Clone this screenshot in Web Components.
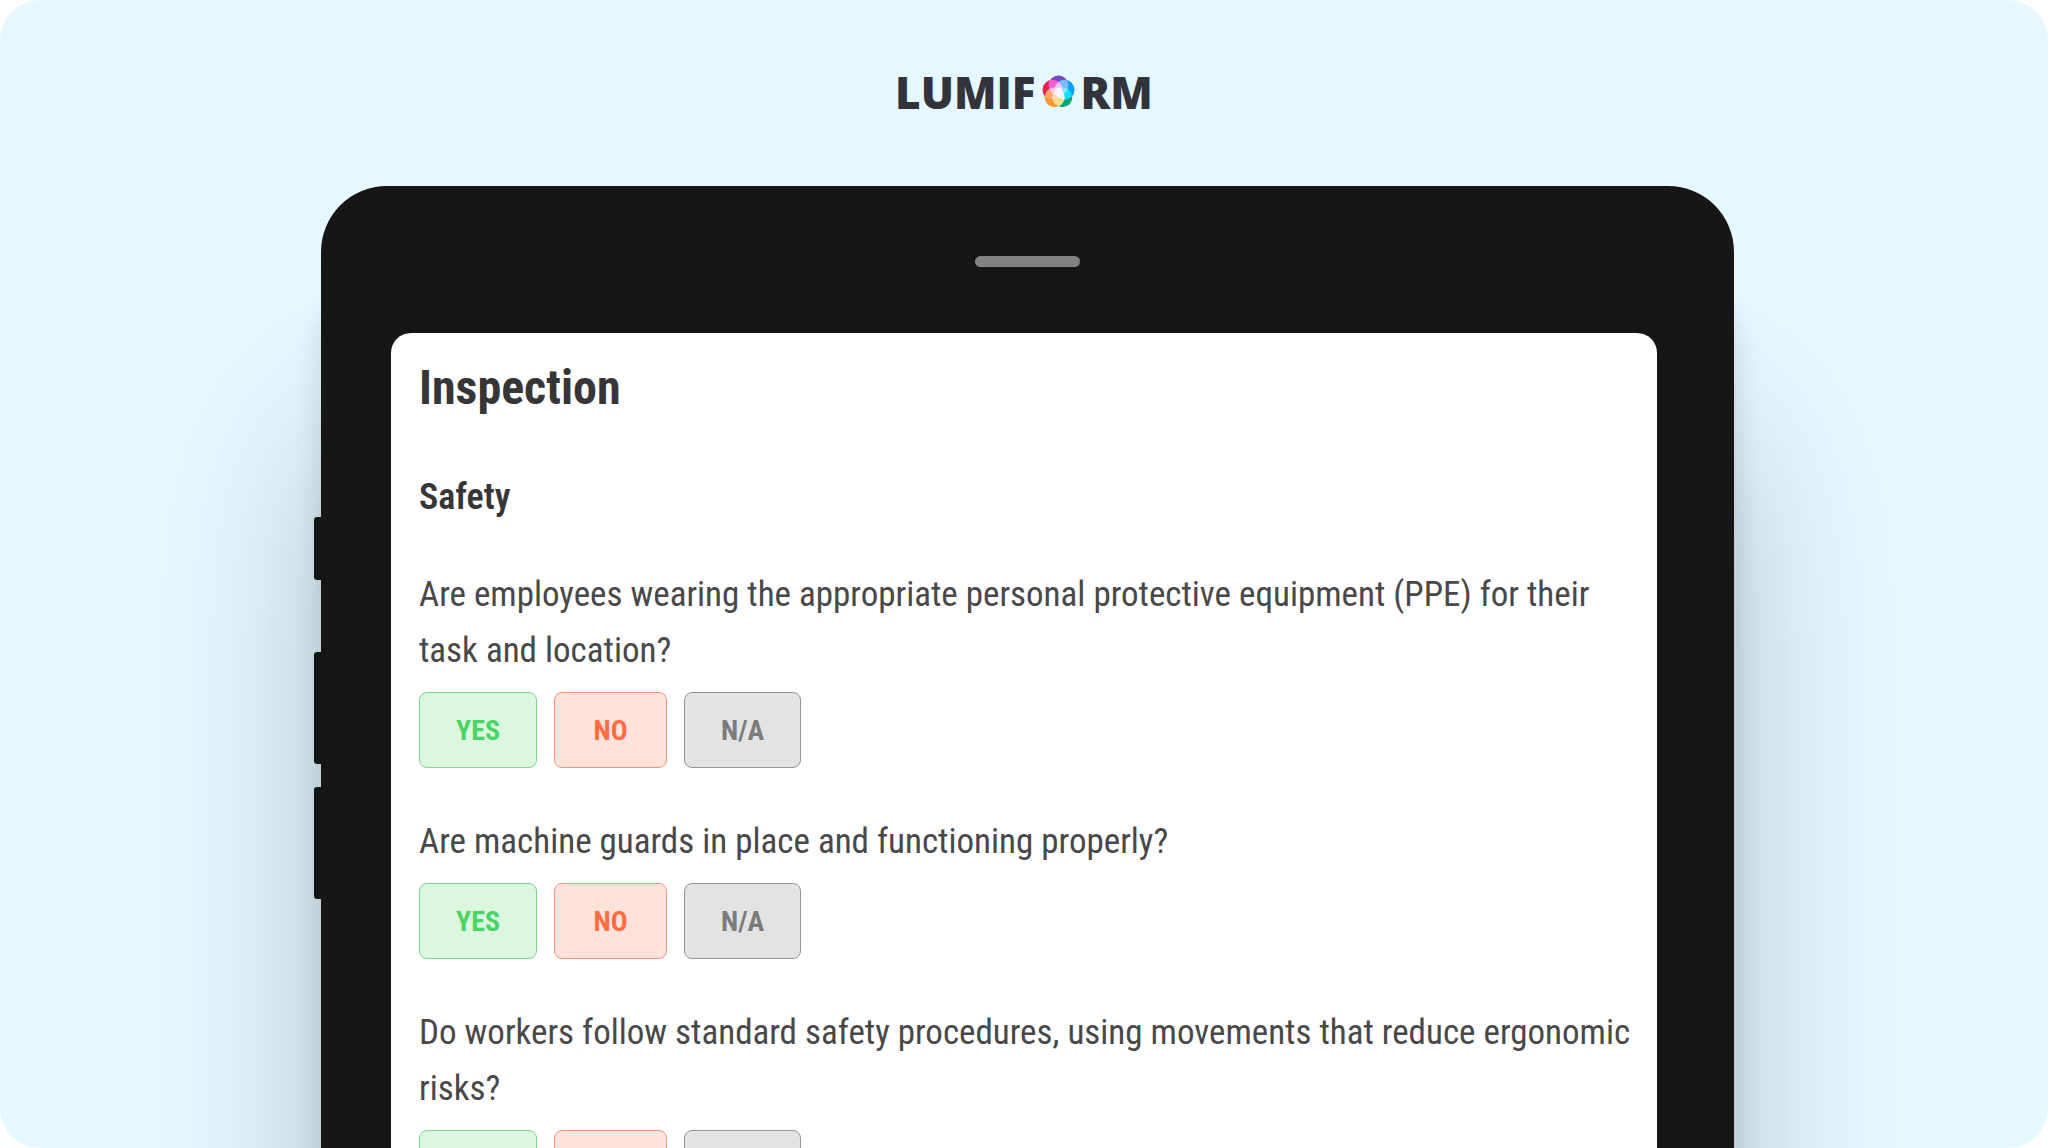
<!DOCTYPE html>
<html lang="en">
<head>
  <meta charset="utf-8">
  <meta name="viewport" content="width=device-width, initial-scale=1">
  <title>Lumiform</title>
  <style>
    body {
      margin: 0;
      background: #fff;
      color: #363636;
      font-family: "Roboto Condensed", Roboto, sans-serif;
    }
  </style>
</head>
<body>
  <promo-stage>
    <lumiform-logo slot="logo"></lumiform-logo>
    <tablet-frame>
      <inspection-form heading="Inspection" section="Safety">
        <inspection-question>Are employees wearing the appropriate personal protective equipment (PPE) for their task and location?</inspection-question>
        <inspection-question>Are machine guards in place and functioning properly?</inspection-question>
        <inspection-question>Do workers follow standard safety procedures, using movements that reduce ergonomic risks?</inspection-question>
      </inspection-form>
    </tablet-frame>
  </promo-stage>

  <script>
    class PromoStage extends HTMLElement {
      constructor() {
        super();
        this.attachShadow({ mode: 'open' });
        this.shadowRoot.innerHTML = `
          <style>
            :host {
              display: flex;
              flex-direction: column;
              height: 100vh;
              overflow: hidden;
              border-radius: 40px;
              background: #e6f8ff;
            }

            header {
              display: flex;
              flex-shrink: 0;
              justify-content: center;
              padding: 66px 0 68px;
            }

            main {
              flex-shrink: 0;
              margin: 0 314px;
            }
          </style>
          <header><slot name="logo"></slot></header>
          <main><slot></slot></main>
        `;
      }
    }

    class LumiformLogo extends HTMLElement {
      constructor() {
        super();
        this.attachShadow({ mode: 'open' });
        this.shadowRoot.innerHTML = `
          <style>
            :host {
              display: flex;
              align-items: center;
              gap: 6px;
              color: #33343b;
              font: 800 44px/52px "Open Sans", sans-serif;
            }

            svg {
              display: block;
              isolation: isolate;
            }

            circle {
              mix-blend-mode: screen;
            }
          </style>
          <span>LUMIF</span>
          <svg width="33" height="34" viewBox="0 0 33 34" role="img" aria-label="O">
            <circle cx="16.5" cy="10.5" r="10" fill="#7548c0" />
            <circle cx="22.5" cy="14.8" r="10" fill="#0aa0f5" />
            <circle cx="20.3" cy="22.3" r="10" fill="#08a672" />
            <circle cx="12.7" cy="22.3" r="10" fill="#f59a2c" />
            <circle cx="10.5" cy="14.8" r="10" fill="#e6204f" />
          </svg>
          <span>RM</span>
        `;
      }
    }

    class TabletFrame extends HTMLElement {
      constructor() {
        super();
        this.attachShadow({ mode: 'open' });
        this.shadowRoot.innerHTML = `
          <style>
            :host {
              display: grid;
              grid-template-columns: 7px 1fr;
            }

            .keys {
              display: flex;
              flex-direction: column;
              gap: 23px;
              padding-top: 331px;
              z-index: 1;
            }

            .key {
              height: 112px;
              border-radius: 3px 0 0 3px;
              background: #101516;
            }

            .key.small {
              height: 63px;
              margin-bottom: 49px;
            }

            .body {
              padding: 70px 0;
              border-radius: 66px;
              background: #161616;
              box-shadow:
                0 100px 32px -8px rgba(20, 20, 20, 0.24),
                0 240px 180px -6px rgba(20, 20, 30, 0.26);
            }

            .speaker {
              width: 105px;
              height: 11px;
              margin: 0 auto 66px;
              border-radius: 6px;
              background: #828282;
            }

            .screen {
              margin: 0 77px 0 70px;
              border-radius: 20px;
              background: #fff;
            }
          </style>
          <div class="keys">
            <div class="key small"></div>
            <div class="key"></div>
            <div class="key"></div>
          </div>
          <div class="body">
            <div class="speaker"></div>
            <div class="screen"><slot></slot></div>
          </div>
        `;
      }
    }

    class InspectionForm extends HTMLElement {
      constructor() {
        super();
        this.attachShadow({ mode: 'open' });
        this.shadowRoot.innerHTML = `
          <style>
            :host {
              display: block;
              padding: 27px 26px 28px 28px;
            }

            h1 {
              margin: 0 0 53px;
              font-size: 48px;
              font-weight: 700;
              line-height: 56px;
            }

            h2 {
              margin: 0 0 42px;
              font-size: 36px;
              font-weight: 600;
              line-height: 56px;
            }

            .questions {
              display: grid;
              gap: 46px;
            }
          </style>
          <h1></h1>
          <h2></h2>
          <div class="questions"><slot></slot></div>
        `;
      }

      connectedCallback() {
        this.shadowRoot.querySelector('h1').textContent = this.getAttribute('heading');
        this.shadowRoot.querySelector('h2').textContent = this.getAttribute('section');
      }
    }

    class InspectionQuestion extends HTMLElement {
      constructor() {
        super();
        this.attachShadow({ mode: 'open' });
        this.shadowRoot.innerHTML = `
          <style>
            :host {
              display: block;
            }

            p {
              margin: 0 0 13px;
              color: #484848;
              font-size: 35px;
              line-height: 56px;
            }

            .answers {
              display: flex;
              gap: 17px;
            }
          </style>
          <div role="group" aria-labelledby="question">
            <p id="question"><slot></slot></p>
            <div class="answers">
              <answer-button kind="yes">YES</answer-button>
              <answer-button kind="no">NO</answer-button>
              <answer-button kind="na">N/A</answer-button>
            </div>
          </div>
        `;
      }
    }

    class AnswerButton extends HTMLElement {
      constructor() {
        super();
        this.attachShadow({ mode: 'open' });
        this.shadowRoot.innerHTML = `
          <style>
            :host {
              display: block;
              --tone: #7b7b7b;
              --edge: #949494;
              --fill: #e3e3e3;
            }

            :host([kind="yes"]) {
              --tone: #4cd365;
              --edge: #7fd68d;
              --fill: #dcf7df;
            }

            :host([kind="no"]) {
              --tone: #ff6e42;
              --edge: #f0957a;
              --fill: #ffe2da;
            }

            button {
              display: block;
              min-width: 113px;
              height: 76px;
              padding: 0 36px;
              border: 1px solid var(--edge);
              border-radius: 8px;
              background: var(--fill);
              color: var(--tone);
              font-family: inherit;
              font-size: 28px;
              font-weight: 700;
              cursor: pointer;
            }
          </style>
          <button type="button"><slot></slot></button>
        `;
      }
    }

    customElements.define('promo-stage', PromoStage);
    customElements.define('lumiform-logo', LumiformLogo);
    customElements.define('tablet-frame', TabletFrame);
    customElements.define('inspection-form', InspectionForm);
    customElements.define('inspection-question', InspectionQuestion);
    customElements.define('answer-button', AnswerButton);
  </script>
</body>
</html>
